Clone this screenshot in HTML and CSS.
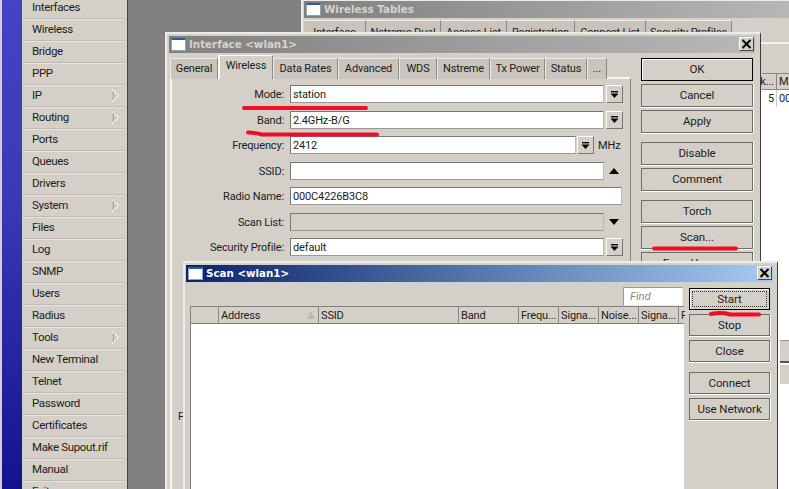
FILE: index.html
```html
<!DOCTYPE html>
<html lang="en">
<head>
<meta charset="utf-8">
<title>Scan wlan1</title>
<link rel="stylesheet" href="styles.css">
</head>
<body>
<svg class="defs" width="0" height="0" aria-hidden="true">
  <symbol id="dd" viewBox="0 0 9 9"><path d="M1 1h7v1.4H1z"/><path d="M0.5 3.6h8L4.5 8z"/></symbol>
  <symbol id="x" viewBox="0 0 11 10"><path d="M1.5 1l8 8M9.5 1l-8 8" fill="none" stroke="#000" stroke-width="2"/></symbol>
  <symbol id="sub" viewBox="0 0 7 13"><path d="M0.5 0.5L6.500 6.500L0.5 12.500z" fill="#d0ccc4" stroke="#fff" stroke-width="1"/><path d="M1 1.500v10" stroke="#8e8a82" stroke-width="1"/></symbol>
</svg>
<div class="desktop">
  <nav class="sidebar">
    <div class="strip"></div>
    <ul class="menu">
      <li>Interfaces</li>
      <li>Wireless</li>
      <li>Bridge</li>
      <li>PPP</li>
      <li>IP<svg class="sub"><use href="#sub"/></svg></li>
      <li>Routing<svg class="sub"><use href="#sub"/></svg></li>
      <li>Ports</li>
      <li>Queues</li>
      <li>Drivers</li>
      <li>System<svg class="sub"><use href="#sub"/></svg></li>
      <li>Files</li>
      <li>Log</li>
      <li>SNMP</li>
      <li>Users</li>
      <li>Radius</li>
      <li>Tools<svg class="sub"><use href="#sub"/></svg></li>
      <li>New Terminal</li>
      <li>Telnet</li>
      <li>Password</li>
      <li>Certificates</li>
      <li>Make Supout.rif</li>
      <li>Manual</li>
      <li>Exit</li>
    </ul>
  </nav>

  <section class="win win-tables">
    <header class="title title-off"><span class="ico"></span><span class="title-text">Wireless Tables</span></header>
    <div class="wt-tabs">
      <span class="wt-tab">Interface</span>
      <span class="wt-tab">Nstreme Dual</span>
      <span class="wt-tab">Access List</span>
      <span class="wt-tab">Registration</span>
      <span class="wt-tab">Connect List</span>
      <span class="wt-tab">Security Profiles</span>
    </div>
    <div class="wt-panel">
      <div class="wt-head"><span class="wt-k">k...</span><span class="wt-m">MA</span></div>
      <div class="wt-list">
        <div class="wt-row"><span class="wt-k">5</span><span class="wt-m">00</span></div>
        <div class="wt-foot"></div>
        <div class="wt-foot wt-foot2"></div>
      </div>
    </div>
  </section>

  <section class="win win-iface">
    <header class="title title-off">
      <span class="ico"></span><span class="title-text">Interface &lt;wlan1&gt;</span>
      <span class="close"><svg><use href="#x"/></svg></span>
    </header>
    <div class="iface-body">
      <div class="iface-main">
        <div class="tabs">
          <span class="tab">General</span>
          <span class="tab tab-on">Wireless</span>
          <span class="tab">Data Rates</span>
          <span class="tab">Advanced</span>
          <span class="tab">WDS</span>
          <span class="tab">Nstreme</span>
          <span class="tab">Tx Power</span>
          <span class="tab">Status</span>
          <span class="tab">...</span>
        </div>
        <div class="panel">
          <div class="row"><label>Mode:</label><span class="field f-std">station</span><span class="dd"><svg><use href="#dd"/></svg></span></div>
          <div class="row"><label>Band:</label><span class="field f-std">2.4GHz-B/G</span><span class="dd"><svg><use href="#dd"/></svg></span></div>
          <div class="row"><label>Frequency:</label><span class="field f-freq">2412</span><span class="dd dd-freq"><svg><use href="#dd"/></svg></span><span class="unit">MHz</span></div>
          <div class="row"><label>SSID:</label><span class="field f-std"></span><span class="tri tri-up"></span></div>
          <div class="row"><label>Radio Name:</label><span class="field f-full">000C4226B3C8</span></div>
          <div class="row"><label>Scan List:</label><span class="field f-std f-off"></span><span class="tri tri-down"></span></div>
          <div class="row"><label>Security Profile:</label><span class="field f-std">default</span><span class="dd"><svg><use href="#dd"/></svg></span></div>
          <div class="row row-cut"><span class="cut-label">F</span></div>
        </div>
      </div>
      <div class="side">
        <div class="side-group">
          <span class="btn btn-default">OK</span>
          <span class="btn">Cancel</span>
          <span class="btn">Apply</span>
        </div>
        <div class="side-group">
          <span class="btn">Disable</span>
          <span class="btn">Comment</span>
        </div>
        <div class="side-group">
          <span class="btn">Torch</span>
          <span class="btn">Scan...</span>
          <span class="btn">Freq. Usage...</span>
        </div>
      </div>
    </div>
  </section>

  <section class="win win-scan">
    <header class="title title-on">
      <span class="ico"></span><span class="title-text">Scan &lt;wlan1&gt;</span>
      <span class="close"><svg><use href="#x"/></svg></span>
    </header>
    <div class="scan-body">
      <div class="scan-main">
        <div class="find-bar"><span class="find">Find</span></div>
        <div class="list-head">
          <span class="lh"></span>
          <span class="lh lh-sort">Address<i class="sort"></i></span>
          <span class="lh">SSID</span>
          <span class="lh">Band</span>
          <span class="lh">Frequ...</span>
          <span class="lh">Signa...</span>
          <span class="lh">Noise...</span>
          <span class="lh">Signa...</span>
          <span class="lh">F</span>
        </div>
        <div class="list-body"></div>
      </div>
      <div class="side scan-side">
        <div class="side-group">
          <span class="btn btn-default btn-focus">Start</span>
          <span class="btn">Stop</span>
          <span class="btn">Close</span>
        </div>
        <div class="side-group">
          <span class="btn">Connect</span>
          <span class="btn">Use Network</span>
        </div>
      </div>
    </div>
  </section>

  <svg class="marks" width="789" height="489" viewBox="0 0 789 489" aria-hidden="true">
    <path d="M244 108H366"/>
    <path d="M248 132.500Q256 133 262 134.500L377 134.500"/>
    <path d="M654 248.500H736"/>
    <path d="M711 314Q722 312 730 314.500L759 314.500"/>
  </svg>
</div>
</body>
</html>
```

FILE: styles.css
```css
* { box-sizing: border-box; }
html, body { margin: 0; height: 100%; overflow: hidden; }
body { font: 11px/1 Roboto, "Liberation Sans", sans-serif; letter-spacing: -0.15px; color: #1c1c1c; background: #808080; }
.defs { position: absolute; }
.desktop { position: relative; width: 789px; height: 489px; overflow: hidden; background: #808080; display: flex; }

/* left menu */
.sidebar { display: flex; width: 128px; height: 489px; flex: none; background: #d4d0c8; border-right: 1px solid #444; overflow: hidden; }
.strip { width: 20px; flex: none; margin-left: 2px; background: linear-gradient(#4343c4, #3a3ab8 40%, #13138f); }
.menu { list-style: none; margin: -3px 0 0; padding: 0 2px 0 2px; flex: 1; }
.menu li { position: relative; height: 22px; padding: 1px 0 0 8px; display: flex; align-items: center; border-bottom: 1px solid #bebab2; box-shadow: 0 1px 0 #e6e3dc; font-size: 11.500px; letter-spacing: -0.35px; }
.sub { position: absolute; left: 88px; top: 4px; width: 7px; height: 13px; }

/* windows */
.win { position: absolute; background: #d4d0c8; border-top: 2px solid #ecebe6; border-left: 2px solid #ecebe6; border-right: 1px solid #3c3c3c; }
.title { display: flex; align-items: center; height: 17px; position: relative; padding-left: 2px; }
.title-off { background: linear-gradient(90deg, #808080, #b8b8b8); color: #d6d3cc; }
.title-on { background: linear-gradient(90deg, #0a246a, #a6caf0); color: #fff; }
.ico { width: 15px; height: 13px; margin-right: 3px; background: #fff; border: 1px solid #8aa; border-top: 2px solid #2a5aa8; flex: none; }
.title-text { font: bold 10.300px/1 "DejaVu Sans", sans-serif; letter-spacing: 0; }
.close { position: absolute; right: 1px; top: 1px; width: 15px; height: 14px; background: #d4d0c8; border: 1px solid; border-color: #fff #444 #444 #fff; display: flex; align-items: center; justify-content: center; }
.close svg { width: 11px; height: 10px; }

/* Wireless Tables */
.win-tables { left: 301px; top: -1px; width: 500px; height: 500px; padding: 0 0 0 1px; }
.wt-tabs { display: grid; grid-template-columns: 62px 75px 66px 68px 71px 86px; margin-top: 2px; height: 22px; }
.wt-tab { background: #c8c4bc; border-top: 1px solid #f0eee8; border-right: 1px solid #8c8880; padding: 6px 0 0; text-align: center; }
.wt-panel { border-top: 2px solid #f4f3ef; height: 460px; padding-top: 29px; }
.wt-head, .wt-row { display: flex; margin-left: 458px; height: 17px; align-items: center; }
.wt-head { background: #d4d0c8; border-top: 1px solid #8c8880; border-bottom: 1px solid #8c8880; }
.wt-k { width: 15px; text-align: right; padding-right: 2px; border-right: 1px solid #8c8880; height: 100%; display: flex; align-items: center; justify-content: flex-end; }
.wt-row .wt-k { border-right: 1px solid #c8c8c8; }
.wt-m { padding-left: 2px; }
.wt-list { background: #fff; height: 410px; }
.wt-foot { margin: 233px 0 0 476px; height: 23px; background: #d4d0c8; border-top: 1px solid #9a968e; border-bottom: 2px solid #555; }
.wt-foot2 { margin-top: 1px; height: 20px; border-bottom: 0; border-top: 1px solid #fff; }

/* Interface */
.win-iface { left: 165px; top: 32px; width: 596px; height: 480px; padding: 2px 5px 0 2px; }
.iface-body { display: flex; }
.iface-main { width: 461px; margin-left: 1px; flex: none; }
.tabs { display: grid; grid-template-columns: 48px 55px 65px 61px 38px 53px 55px 42px 20px; height: 24px; align-items: end; }
.tab { height: 21px; background: #c9c5bd; border-top: 1px solid #eeece6; border-left: 1px solid #eeece6; border-right: 1px solid #8c8880; text-align: center; line-height: 20px; white-space: nowrap; }
.tab-on { height: 24px; background: #d4d0c8; border-color: #fbfbf9 #8c8880 #d4d0c8 #fbfbf9; border-width: 1px 1px 0 2px; line-height: 20px; position: relative; top: 2px; margin-bottom: 2px; z-index: 1; }
.panel { height: 440px; border-top: 2px solid #f6f5f1; border-left: 2px solid #f6f5f1; border-right: 1px solid #8c8880; padding-top: 6px; display: flex; flex-direction: column; gap: 7.500px; }
.row { display: flex; align-items: center; height: 18px; }
.row label { width: 112px; text-align: right; margin-right: 6px; flex: none; padding-top: 1px; }
.field { height: 18px; background: #fff; border: 1px solid; border-color: #777 #bbb #999 #777; padding-left: 2px; line-height: 18px; flex: none; }
.f-std { width: 314px; }
.f-freq { width: 286px; }
.f-full { width: 332px; }
.f-off { background: #d4d0c8; }
.dd { width: 17px; height: 18px; margin-left: 2px; border: 1px solid; border-color: #fff #777 #777 #fff; background: #d4d0c8; display: flex; align-items: center; justify-content: center; flex: none; }
.dd svg { width: 9px; height: 9px; }
.dd-freq { margin-left: 1px; }
.unit { margin-left: 4px; }
.tri { width: 0; height: 0; margin-left: 5px; border-left: 5px solid transparent; border-right: 5px solid transparent; }
.tri-up { border-bottom: 6px solid #000; }
.tri-down { border-top: 6px solid #000; }
.row-cut { margin-top: 144px; padding-left: 6px; }

/* shared buttons */
.side { width: 112px; margin-left: 10px; padding-top: 5px; display: flex; flex-direction: column; gap: 9px; flex: none; }
.side-group { display: flex; flex-direction: column; gap: 3px; }
.btn { height: 23px; padding-top: 1px; display: flex; align-items: center; justify-content: center; background: #d4d0c8; border: 1px solid #6c6c68; box-shadow: 0 1px 0 #fff, 1px 0 0 #fff; font-size: 11.500px; letter-spacing: -0.1px; }
.btn-default { border: 1px solid #000; box-shadow: inset 1px 1px 0 #fff; }
.btn-focus { outline: 1px dotted #333; outline-offset: -4px; height: 22px; }

/* Scan */
.win-scan { left: 183px; top: 261px; width: 595px; height: 240px; padding: 2px 4px 0 1px; }
.scan-body { display: flex; padding-left: 4px; }
.scan-main { width: 494px; flex: none; }
.find-bar { height: 24px; padding-top: 5px; display: flex; justify-content: flex-end; margin-right: 1px; }
.find { width: 60px; height: 19px; background: #fff; border: 1px solid; border-color: #999 #e8e8e8 #e8e8e8 #999; font-style: italic; color: #8a8a8a; padding: 3px 0 0 6px; font-size: 11.500px; }
.list-head { display: grid; grid-template-columns: 28px 100px 140px 60px 40px 40px 40px 40px 6px; height: 18px; border-top: 1px solid #808080; border-left: 1px solid #808080; border-bottom: 1px solid #808080; background: #d4d0c8; }
.lh { border-right: 1px solid #8c8880; padding: 2px 0 0 2px; white-space: nowrap; overflow: hidden; line-height: 13px; }
.lh:last-child { border-right: 0; }
.lh-sort { position: relative; }
.sort { position: absolute; right: 3px; top: 4px; border-left: 4px solid transparent; border-right: 4px solid transparent; border-bottom: 8px solid #bdb9b1; }
.list-body { height: 200px; background: #fff; border-left: 1px solid #808080; }
.scan-side { width: 81px; margin-left: 5px; padding-top: 6px; gap: 10px; }
.scan-side .side-group { gap: 4px; }
.scan-side .btn { height: 22px; }

/* red annotations */
.marks { position: absolute; left: 0; top: 0; pointer-events: none; }
.marks path { fill: none; stroke: #f20c28; stroke-width: 4; stroke-linecap: round; }
```
